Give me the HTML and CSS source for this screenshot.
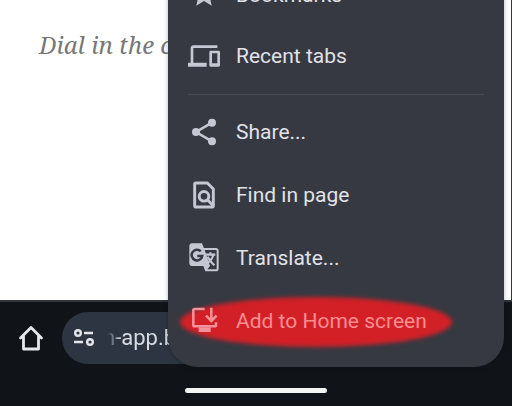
FILE: index.html
```
<!DOCTYPE html>
<html lang="en">
<head>
  <meta charset="UTF-8">
  <meta name="viewport" content="width=device-width, initial-scale=1">
  <title>Browser menu</title>
  <link rel="stylesheet" href="styles.css">
</head>
<body>
  <main class="page">
    <p class="tagline">Dial in the c</p>
  </main>

  <footer class="bottom">
    <div class="toolbar">
      <button class="home" aria-label="Home">
        <svg width="26" height="28" viewBox="0 0 26 28" fill="none" stroke="#e6e7ea" stroke-width="2.8" stroke-linejoin="round" stroke-linecap="round"><path d="M2.500 14 13 3.500l10.500 10.500M5.500 12v13h15V12"/></svg>
      </button>
      <div class="omnibox">
        <svg width="22" height="20" viewBox="0 0 22 20" fill="none" stroke="#e3e5e9" stroke-width="2.400"><circle cx="5" cy="5" r="2.800"/><path d="M11 5h9M1 14h9"/><circle cx="17" cy="14" r="2.800"/></svg>
        <input class="url" type="text" aria-label="Address" value="n-app.b" readonly>
      </div>
    </div>
    <div class="handle"></div>
  </footer>

  <nav class="menu">
    <button class="item first">
      <svg class="icon" viewBox="0 0 24 24"><path d="M12 16.500 17.800 20l-1.500-6.600L22 9.200l-7.200-.6L12 2 9.200 8.600 2 9.200l5.700 4.200L6.200 20z"/></svg>
      <span>Bookmarks</span>
    </button>
    <button class="item">
      <svg class="icon" viewBox="0 0 24 24"><path d="M4 6h18V4H4c-1.100 0-2 .9-2 2v11H0v3h14v-3H4V6zm19 2h-6c-.55 0-1 .45-1 1v10c0 .55.45 1 1 1h6c.55 0 1-.45 1-1V9c0-.55-.45-1-1-1zm-1 9.500h-4V10h4v7.500z"/></svg>
      <span>Recent tabs</span>
    </button>
    <hr class="divider">
    <button class="item">
      <svg class="icon" viewBox="0 0 24 24"><path d="M18 5 6 12l12 7" fill="none" stroke="#c5c8d2" stroke-width="1.900"/><circle cx="18" cy="5" r="3"/><circle cx="6" cy="12" r="3"/><circle cx="18" cy="19" r="3"/></svg>
      <span>Share...</span>
    </button>
    <button class="item">
      <svg class="icon" viewBox="0 0 24 24" fill="none" stroke="#c5c8d2" stroke-width="2.200"><path d="M14.500 3H6c-.6 0-1 .4-1 1v16c0 .6.400 1 1 1h12c.6 0 1-.4 1-1V7.500z" stroke-linejoin="round"/><circle cx="12" cy="13" r="3.600"/><path d="m14.500 15.500 4.500 4.500"/></svg>
      <span>Find in page</span>
    </button>
    <button class="item">
      <svg class="icon" viewBox="0 0 24 24"><path d="M3 1h7.500l1.400 3.500H21c1.100 0 2 .9 2 2V20c0 1.100-.9 2-2 2h-8l-1.500-4H3c-1.100 0-2-.9-2-2V3c0-1.100.9-2 2-2z"/><path d="M12.500 6H21c.3 0 .5.200.5.500V20c0 .3-.2.500-.5.500h-6.500l2-2.500z" fill="#363941"/><path d="M13.200 9.500h7.300M16.800 7.700v1.800M19 9.500c-.5 2.800-2.500 5-4.500 6.500M14.800 11c.8 2.300 2.800 4.500 5 6.500" fill="none" stroke="#c5c8d2" stroke-width="1.600"/><path d="M9.600 7A4 4 0 1 0 10.700 10.500H7" fill="none" stroke="#363941" stroke-width="1.900"/></svg>
      <span>Translate...</span>
    </button>
    <button class="item marked">
      <svg class="icon" viewBox="0 0 24 24" fill="none" stroke="#f3929a" stroke-width="1.900"><path d="M12.500 3H5c-.7 0-1 .4-1 1v11c0 .6.300 1 1 1h15c.7 0 1-.4 1-1v-2"/><path d="M17.500 2v9.500M13.500 8l4 4 4-4"/><path d="M8 18.500h9" stroke-width="3.500"/></svg>
      <span>Add to Home screen</span>
    </button>
  </nav>
</body>
</html>
```
FILE: styles.css
```
* { box-sizing: border-box; }
body {
  margin: 0;
  height: 100vh;
  display: flex;
  flex-direction: column;
  position: relative;
  overflow: hidden;
  background: #fff;
  font-family: Roboto, "Liberation Sans", sans-serif;
}
button { border: 0; padding: 0; background: none; font: inherit; }

.page { flex: 1; padding: 28px 39px; border-right: 1px solid #33363b; }
.tagline {
  margin: 0;
  color: #777;
  font: italic 24px/34px "Noto Serif", "Liberation Serif", serif;
}

.bottom {
  background: #101419;
  border-top: 2px solid #303338;
  padding: 10px 18px 13px;
}
.toolbar { display: flex; align-items: center; gap: 18px; }
.home { display: flex; }
.omnibox {
  flex: 1;
  display: flex;
  align-items: center;
  gap: 8px;
  height: 52px;
  padding: 0 11px;
  border-radius: 26px;
  background: #2c3541;
}
.url {
  flex: 1;
  min-width: 0;
  padding: 0;
  border: 0;
  outline: 0;
  background: none;
  color: #d7dce3;
  font: 22px/28px Roboto, "Liberation Sans", sans-serif;
  -webkit-mask-image: linear-gradient(to right, transparent 4px, #000 18px);
  mask-image: linear-gradient(to right, transparent 4px, #000 18px);
}
.handle {
  width: 142px;
  height: 5px;
  margin: 24px auto 0;
  border-radius: 3px;
  background: #f4f4f4;
}

/* overflow menu, hangs over the page and the toolbar */
.menu {
  position: absolute;
  right: 8px;
  bottom: 39px;
  width: 336px;
  padding-bottom: 15px;
  border-radius: 30px;
  background: #363941;
  box-shadow: 0 0 4px rgba(0, 0, 0, 0.3);
}
.item {
  position: relative;
  display: flex;
  align-items: center;
  gap: 16px;
  width: 100%;
  height: 63px;
  padding: 0 20px;
  color: #e1e2e8;
  font-size: 21px;
  line-height: 28px;
  text-align: left;
}
.first { height: 58px; }
.icon { width: 32px; height: 32px; fill: #c5c8d2; }
.icon[fill="none"] { fill: none; }
.divider { height: 1px; margin: 7px 20px 5px; border: 0; background: #464952; }

.marked { color: #ff8d8f; }
.marked::before {
  content: "";
  position: absolute;
  left: 12px;
  right: 52px;
  top: 8px;
  height: 50px;
  border-radius: 50%;
  background: #d32027;
  filter: blur(2px);
}
.marked .icon, .marked span { position: relative; }
```
